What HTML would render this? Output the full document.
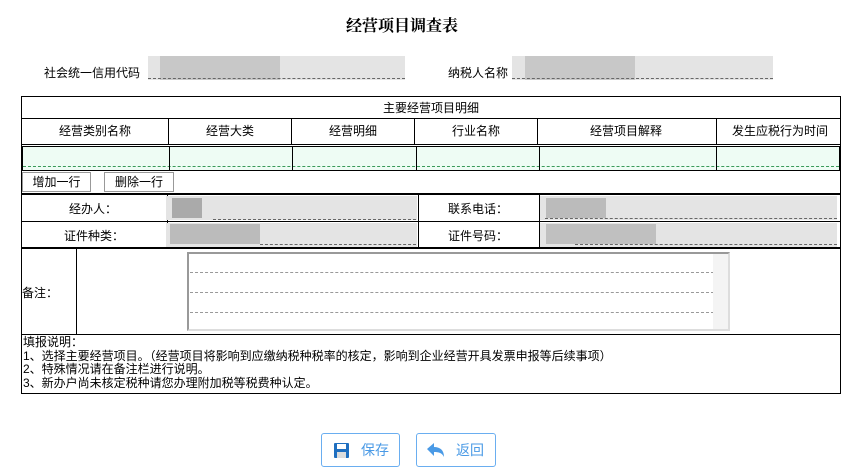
<!DOCTYPE html>
<html><head><meta charset="utf-8"><style>
*{margin:0;padding:0;box-sizing:border-box}
body{width:867px;height:475px;background:#fff;position:relative;font-family:"Liberation Sans","Noto Sans CJK SC",sans-serif;font-size:12px;color:#000;overflow:hidden}
.a{position:absolute}
.l{position:absolute;background:#000}
.t{position:absolute;white-space:nowrap;line-height:14px}
.blur{position:absolute;background:#e4e4e4}
.dash{position:absolute;border-bottom:1px dashed #666;height:0}
.btn{position:absolute;border:1px solid #999;background:#fff;text-align:center;line-height:18px;font-size:12px}
.bb{position:absolute;border:1px solid #6aaef0;border-radius:3px;color:#4a9ae6;font-size:14px;line-height:32px}
</style></head><body>
<div class="t" style="left:346px;top:18px;font-size:16px;font-weight:bold;line-height:18px;font-family:'Liberation Serif','Noto Serif CJK SC',serif">经营项目调查表</div>

<div class="t" style="left:44px;top:66px">社会统一信用代码</div>
<div class="blur" style="left:148px;top:56px;width:257px;height:24px"></div>
<div class="blur" style="left:160px;top:56px;width:120px;height:24px;background:#c8c8c8"></div>
<div class="dash" style="left:148px;top:78px;width:257px"></div>
<div class="t" style="left:448px;top:66px">纳税人名称</div>
<div class="blur" style="left:512px;top:56px;width:261px;height:24px"></div>
<div class="blur" style="left:525px;top:56px;width:110px;height:24px;background:#c8c8c8"></div>
<div class="dash" style="left:512px;top:78px;width:261px"></div>

<div class="a" style="left:21px;top:96px;width:820px;height:298px;border:1px solid #000"></div>
<div class="t" style="left:383px;top:101px">主要经营项目明细</div>
<div class="l" style="left:21px;top:118px;width:820px;height:1px"></div>
<div class="l" style="left:21px;top:144px;width:820px;height:1px"></div>
<div class="l" style="left:168px;top:118px;width:1px;height:26px"></div>
<div class="l" style="left:291px;top:118px;width:1px;height:26px"></div>
<div class="l" style="left:414px;top:118px;width:1px;height:26px"></div>
<div class="l" style="left:537px;top:118px;width:1px;height:26px"></div>
<div class="l" style="left:716px;top:118px;width:1px;height:26px"></div>
<div class="t" style="left:59px;top:124px">经营类别名称</div>
<div class="t" style="left:206px;top:124px">经营大类</div>
<div class="t" style="left:329px;top:124px">经营明细</div>
<div class="t" style="left:452px;top:124px">行业名称</div>
<div class="t" style="left:590px;top:124px">经营项目解释</div>
<div class="t" style="left:732px;top:124px">发生应税行为时间</div>
<div class="a" style="left:22px;top:146px;width:818px;height:25px;border:1px solid #000;background:#eefcf4"></div>
<div class="dash" style="left:23px;top:166px;width:816px;border-color:#3a9a5a"></div>
<div class="l" style="left:169px;top:146px;width:1px;height:25px"></div>
<div class="l" style="left:292px;top:146px;width:1px;height:25px"></div>
<div class="l" style="left:416px;top:146px;width:1px;height:25px"></div>
<div class="l" style="left:539px;top:146px;width:1px;height:25px"></div>
<div class="l" style="left:716px;top:146px;width:1px;height:25px"></div>
<div class="btn" style="left:22px;top:172px;width:69px;height:20px">增加一行</div>
<div class="btn" style="left:104px;top:172px;width:70px;height:20px">删除一行</div>
<div class="l" style="left:21px;top:193px;width:820px;height:2px"></div>

<div class="l" style="left:21px;top:221px;width:820px;height:1px"></div>
<div class="l" style="left:21px;top:247px;width:820px;height:2px"></div>
<div class="l" style="left:167px;top:195px;width:1px;height:53px"></div>
<div class="l" style="left:418px;top:195px;width:1px;height:53px"></div>
<div class="l" style="left:539px;top:195px;width:1px;height:53px"></div>
<div class="t" style="left:69px;top:202px">经办人：</div>
<div class="t" style="left:64px;top:229px">证件种类：</div>
<div class="t" style="left:448px;top:202px">联系电话：</div>
<div class="t" style="left:448px;top:229px">证件号码：</div>
<div class="blur" style="left:166px;top:196px;width:251px;height:24px"></div>
<div class="blur" style="left:172px;top:198px;width:30px;height:20px;background:#aaa"></div>
<div class="dash" style="left:213px;top:219px;width:203px"></div>
<div class="blur" style="left:166px;top:223px;width:251px;height:24px"></div>
<div class="blur" style="left:170px;top:224px;width:90px;height:20px;background:#bbb"></div>
<div class="dash" style="left:260px;top:244px;width:156px"></div>
<div class="blur" style="left:540px;top:196px;width:297px;height:24px"></div>
<div class="blur" style="left:546px;top:198px;width:60px;height:20px;background:#bbb"></div>
<div class="dash" style="left:545px;top:218px;width:292px"></div>
<div class="blur" style="left:540px;top:223px;width:297px;height:24px"></div>
<div class="blur" style="left:546px;top:224px;width:110px;height:20px;background:#c0c0c0"></div>
<div class="dash" style="left:575px;top:244px;width:262px"></div>

<div class="l" style="left:76px;top:249px;width:1px;height:86px"></div>
<div class="t" style="left:22px;top:286px">备注：</div>
<div class="a" style="left:187px;top:252px;width:543px;height:79px;border:2px solid #999;border-right-color:#ddd;border-bottom-color:#ddd"></div>
<div class="dash" style="left:190px;top:272px;width:524px;border-color:#999"></div>
<div class="dash" style="left:190px;top:292px;width:524px;border-color:#999"></div>
<div class="dash" style="left:190px;top:312px;width:524px;border-color:#999"></div>
<div class="a" style="left:713px;top:254px;width:15px;height:75px;background:#f4f4f4"></div>
<div class="l" style="left:21px;top:334px;width:820px;height:1px"></div>
<div class="t" style="left:23px;top:336px;line-height:13.5px">填报说明：<br>1、选择主要经营项目。（经营项目将影响到应缴纳税种税率的核定，影响到企业经营开具发票申报等后续事项）<br>2、特殊情况请在备注栏进行说明。<br>3、新办户尚未核定税种请您办理附加税等税费种认定。</div>

<div class="bb" style="left:321px;top:433px;width:79px;height:34px">
<svg class="a" style="left:12px;top:9px" width="15" height="15" viewBox="0 0 15 15"><rect x="0" y="0" width="15" height="15" rx="1" fill="#1f6fc0"/><rect x="3" y="1" width="9" height="5" fill="#fff"/><rect x="3" y="9" width="9" height="6" fill="#ddd"/></svg>
<span class="a" style="left:39px;top:0">保存</span></div>
<div class="bb" style="left:416px;top:433px;width:80px;height:34px">
<svg class="a" style="left:10px;top:9px" width="18" height="15" viewBox="0 0 18 15"><path d="M0 6 L7 0 L7 4 C13 4 17 7 17 14 C15 10 12 9 7 9 L7 13 Z" fill="#4a9ae6"/></svg>
<span class="a" style="left:39px;top:0">返回</span></div>
</body></html>
